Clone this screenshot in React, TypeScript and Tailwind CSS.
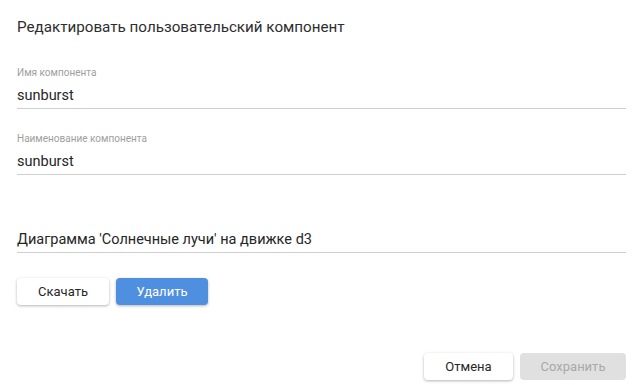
import React from "react";

const Field = ({ label, value, className = "" }: { label?: string; value: string; className?: string }) => (
  <div className={`flex flex-col ${className}`}>
    <div className="h-[14px] text-[10px] leading-[14px] text-[#9e9e9e]">{label ?? ""}</div>
    <div className="mt-[6px] h-[20px] text-[14.5px] leading-[20px] text-[#262626]">{value}</div>
    <div className="mt-[2px] h-px bg-[#d0d0d0]" />
  </div>
);

export default function App() {
  return (
    <div
      className="w-[642px] h-[385px] bg-white pl-[17px] pr-[16px] flex flex-col"
      style={{ fontFamily: "Roboto, 'Liberation Sans', Arial, sans-serif" }}
    >
      <h1 className="mt-[16px] h-[22px] text-[15.2px] leading-[22px] text-[#2e2e2e] font-normal">
        Редактировать пользовательский компонент
      </h1>
      <Field className="mt-[28px]" label="Имя компонента" value="sunburst" />
      <Field className="mt-[23px]" label="Наименование компонента" value="sunburst" />
      <Field className="mt-[35px]" value="Диаграмма 'Солнечные лучи' на движке d3" />
      <div className="mt-[25px] flex gap-[7px]">
        <button className="w-[92px] h-[27px] rounded-[4px] bg-white text-[13px] text-[#262626] shadow-[0_1px_3px_rgba(0,0,0,0.3)]">
          Скачать
        </button>
        <button className="w-[92px] h-[27px] rounded-[4px] bg-[#4f8fdf] text-[13px] text-white shadow-[0_1px_3px_rgba(0,0,0,0.3)]">
          Удалить
        </button>
      </div>
      <div className="mt-[48px] flex justify-end gap-[7px]">
        <button className="w-[89px] h-[27px] rounded-[4px] bg-white text-[13px] text-[#262626] shadow-[0_1px_3px_rgba(0,0,0,0.3)]">
          Отмена
        </button>
        <button className="w-[106px] h-[27px] rounded-[4px] bg-[#e0e0e0] text-[13px] text-[#a8a8a8]">
          Сохранить
        </button>
      </div>
    </div>
  );
}
